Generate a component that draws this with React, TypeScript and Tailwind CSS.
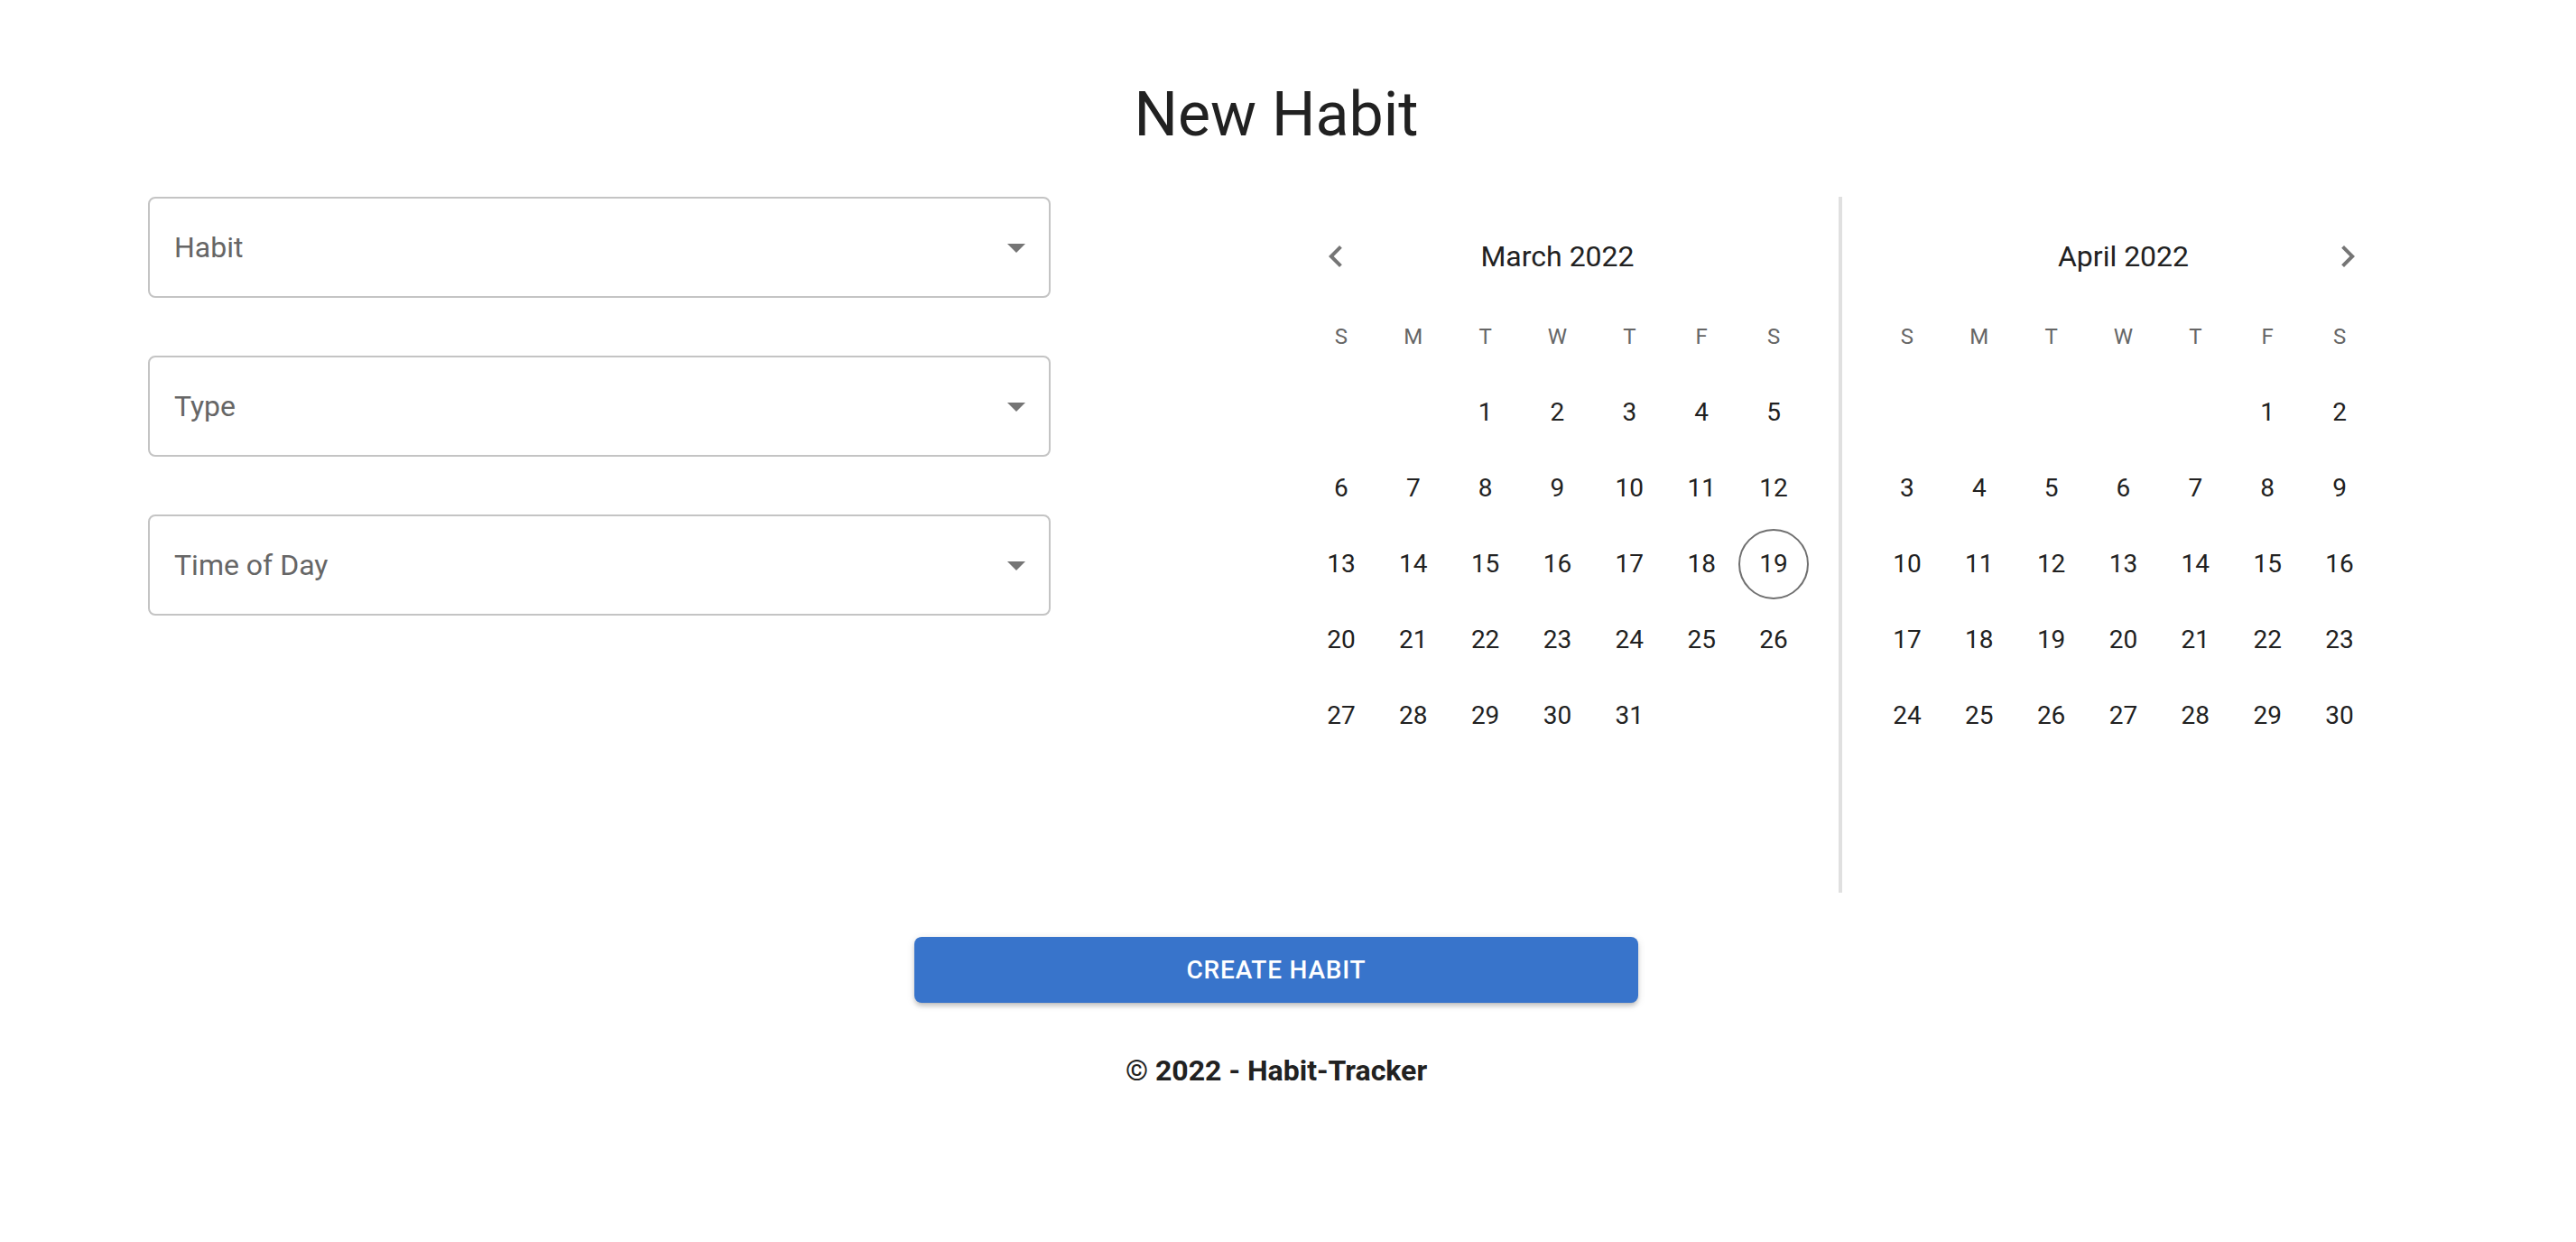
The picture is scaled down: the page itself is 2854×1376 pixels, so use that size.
import React from 'react';

interface MonthProps {
  title: string;
  offset: number;
  days: number;
  showPrev?: boolean;
  showNext?: boolean;
  today?: number;
}

const weekdays = ['S', 'M', 'T', 'W', 'T', 'F', 'S'];

const ChevronLeft = () => (
  <svg width="48" height="48" viewBox="0 0 24 24" fill="#757575">
    <path d="M15.41 7.41 14 6l-6 6 6 6 1.41-1.41L10.83 12z" />
  </svg>
);

const ChevronRight = () => (
  <svg width="48" height="48" viewBox="0 0 24 24" fill="#757575">
    <path d="M10 6 8.59 7.41 13.17 12l-4.58 4.59L10 18l6-6z" />
  </svg>
);

const DropArrow = () => (
  <svg width="48" height="48" viewBox="0 0 24 24" fill="#757575">
    <path d="M7 10l5 5 5-5z" />
  </svg>
);

const SelectField: React.FC<{ label: string }> = ({ label }) => (
  <div className="flex h-[112px] w-[1000px] items-center justify-between rounded-lg border-2 border-[#c4c4c4] pl-[27px] pr-[12px]">
    <span className="text-[32px] text-[#666666]">{label}</span>
    <DropArrow />
  </div>
);

const Month: React.FC<MonthProps> = ({ title, offset, days, showPrev, showNext, today }) => {
  const cells: (number | null)[] = [];
  for (let i = 0; i < offset; i++) cells.push(null);
  for (let d = 1; d <= days; d++) cells.push(d);

  return (
    <div className="w-[624px] px-[32px] pt-[42px]">
      <div className="grid h-[48px] grid-cols-[80px_1fr_80px] items-center">
        <div className="flex justify-center pr-[12px]">{showPrev && <ChevronLeft />}</div>
        <div className="text-center text-[32px] text-[#212121]">{title}</div>
        <div className="flex justify-center pl-[18px]">{showNext && <ChevronRight />}</div>
      </div>
      <div className="mt-[41px] grid h-[48px] grid-cols-7 items-center">
        {weekdays.map((w, i) => (
          <div key={i} className="text-center text-[24px] text-[#666666]">
            {w}
          </div>
        ))}
      </div>
      <div className="mt-[18px] grid grid-cols-7">
        {cells.map((d, i) => (
          <div key={i} className="flex h-[84px] items-center justify-center">
            {d !== null && (
              <div
                className={
                  d === today
                    ? 'flex h-[78px] w-[78px] items-center justify-center rounded-full border-2 border-[#707070] text-[28px] text-[#212121]'
                    : 'flex h-[78px] w-[78px] items-center justify-center text-[28px] text-[#212121]'
                }
              >
                {d}
              </div>
            )}
          </div>
        ))}
      </div>
    </div>
  );
};

export default function App() {
  return (
    <div className="w-[2828px] bg-white font-['Roboto',sans-serif]">
      <h1 className="pt-[85px] text-center text-[68px] leading-[84px] text-[#212121]">New Habit</h1>

      <div className="mx-auto mt-[49px] flex w-[2500px]">
        <div className="flex w-[1250px] flex-col gap-[64px]">
          <SelectField label="Habit" />
          <SelectField label="Type" />
          <SelectField label="Time of Day" />
        </div>
        <div className="flex h-[771px] w-[1250px]">
          <Month title="March 2022" offset={2} days={31} showPrev today={19} />
          <div className="h-full w-[4px] bg-[#e0e0e0]" />
          <Month title="April 2022" offset={5} days={30} showNext />
        </div>
      </div>

      <div className="mt-[49px] flex justify-center">
        <button className="h-[73px] w-[802px] rounded-lg bg-[#3874cb] text-[28px] font-medium tracking-[0.8px] text-white shadow-[0_4px_2px_-4px_rgba(0,0,0,0.2),0_4px_4px_0_rgba(0,0,0,0.14),0_2px_10px_0_rgba(0,0,0,0.12)]">
          CREATE HABIT
        </button>
      </div>

      <p className="mt-[53px] pb-[150px] text-center text-[32px] font-bold leading-[44px] text-[#212121]">
        © 2022 - Habit-Tracker
      </p>
    </div>
  );
}
